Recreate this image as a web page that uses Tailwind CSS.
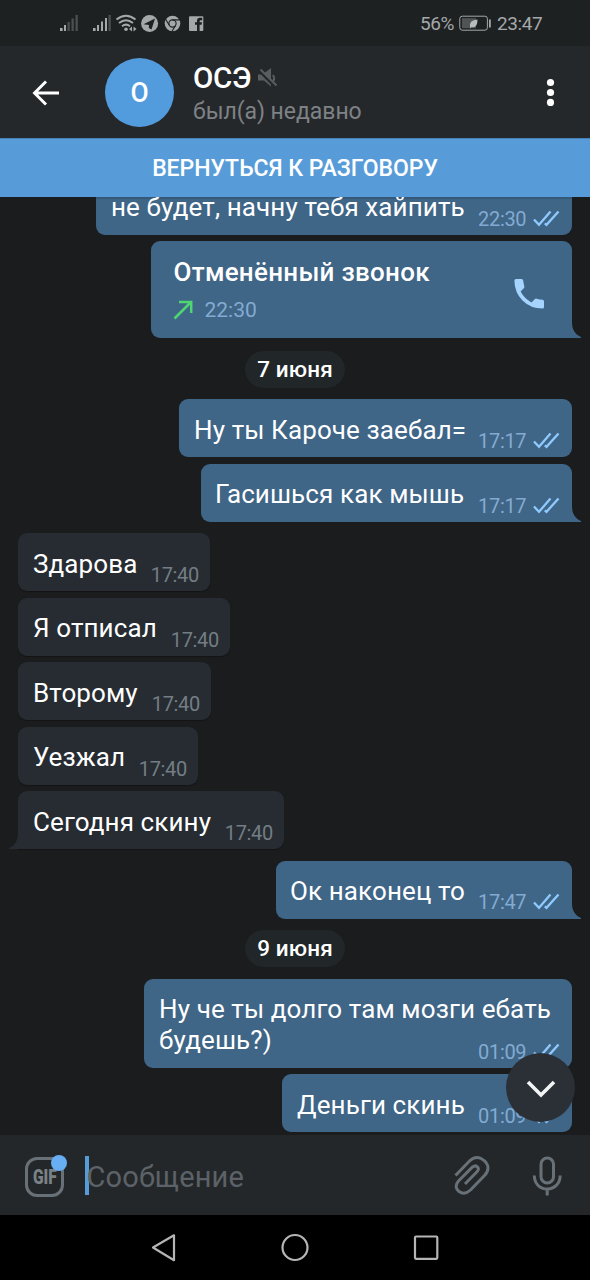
<!DOCTYPE html>
<html lang="ru">
<head>
  <meta charset="UTF-8">
  <title>ОСЭ</title>
  <script src="https://cdn.jsdelivr.net/npm/@tailwindcss/browser@4"></script>
</head>
<body class="w-[590px] h-[1280px] overflow-hidden flex flex-col bg-[#1b1c1d] font-['Roboto','Noto_Sans',sans-serif] text-white">

  <!-- shared shapes -->
  <svg class="hidden">
    <symbol id="checks" viewBox="0 0 27 17"><path d="M1 9.500 6 14.800 17.500 1.500M11.800 13.300 13.500 14.800 25.500 1.500" fill="none" stroke="#8fcaff" stroke-width="2.300"/></symbol>
    <symbol id="tail" viewBox="0 0 10 16"><path d="M0 0C0 7 2.500 12 9 15V16H0Z" fill="currentColor"/></symbol>
  </svg>

  <!-- status bar -->
  <div class="h-[46px] shrink-0 bg-[#1e2122] flex items-center text-[#a5a8aa]">
    <svg class="ml-[58px] mt-px" width="150" height="20" viewBox="58 14 150 20">
      <path d="M60 28h2.600v3H60zM64 25h2v6h-2z" fill="#a5a8aa"/>
      <path d="M67.500 22h2.300v9h-2.300zM71.500 18.500h2.300v12.500h-2.300zM75.500 15h2.300v16h-2.300z" fill="#4c4f51"/>
      <path d="M93 28h2.600v3H93zM97 25h2v6h-2zM101 21.500h2v9.500h-2zM105 18h2v13h-2z" fill="#a5a8aa"/>
      <path d="M108.500 15h2.300v16h-2.300z" fill="#4c4f51"/>
      <g fill="none" stroke="#a5a8aa" stroke-width="2">
        <path d="M116.500 19.500Q126 12 135.500 19.500"/>
        <path d="M119 23Q126 17.500 133 23"/>
        <path d="M122 26.300Q126 23 130 26.300"/>
      </g>
      <circle cx="126" cy="29.300" r="1.800" fill="#a5a8aa"/>
      <path d="M129 29l3-2.500v5zM136.500 29l-3-2.500v5z" fill="#a5a8aa"/>
      <circle cx="149.600" cy="23.500" r="8.500" fill="#a5a8aa"/>
      <path d="M143.500 24.200 155 18.500 151.500 29.500 148.800 28 149 25Z" fill="#1e2122"/>
      <circle cx="172.500" cy="23.500" r="7.800" fill="#a5a8aa"/>
      <g fill="none" stroke="#1e2122" stroke-width="1.100">
        <circle cx="172.500" cy="23.500" r="3.600"/>
        <path d="M172.500 19.900h7.500M169.300 25.300l-4-6.500M175.700 25.300l-4 6.500"/>
      </g>
      <rect x="189" y="16.300" width="14.300" height="14.700" rx="1" fill="#a5a8aa"/>
      <path d="M197 31v-6.200h-2v-2.500h2v-1.600q0-3 3-3h2.200v2.500h-1.400q-1.200 0-1.200 1.200v.9h2.400l-.4 2.500h-2V31z" fill="#1e2122"/>
    </svg>
    <span class="ml-[212px] w-[36px] mt-px text-[19px] tracking-[-0.4px] leading-6 whitespace-nowrap">56%</span>
    <svg class="ml-[3px] mt-px" width="33" height="17" viewBox="0 0 33 17">
      <rect x=".8" y="1.200" width="27.600" height="14" rx="2.500" fill="none" stroke="#a5a8aa" stroke-width="1"/>
      <rect x="3" y="3.200" width="14" height="10" fill="#515456"/>
      <path d="M11 12.500Q9.500 5 18.500 4.500 18.500 13.500 12.500 12L11 13.500Z" fill="#b8bbbc"/>
      <path d="M30 4.500h1.800v8H30z" fill="#a5a8aa"/>
    </svg>
    <span class="ml-[5px] mt-px text-[19px] tracking-[-0.4px] leading-6">23:47</span>
  </div>

  <!-- chat header -->
  <div class="h-[92px] shrink-0 bg-[#25282b] flex items-center">
    <svg class="ml-[31px] mt-px" width="30" height="28" viewBox="0 0 30 28"><path d="M15 2.500 3.500 14 15 25.500M3 14H28" fill="none" stroke="#fff" stroke-width="2.900"/></svg>
    <div class="ml-[44px] w-[69px] h-[69px] rounded-full bg-[#529bdd] flex items-center justify-center pt-[2px] text-[28px] font-medium"><span class="scale-x-[0.94]">О</span></div>
    <div class="ml-[19px] grow flex flex-col pt-[3px]">
      <div class="h-8 flex items-center">
        <span class="text-[29.5px] leading-8 font-medium tracking-[-0.3px] w-[59px]">ОСЭ</span>
        <svg class="ml-[6px]" width="20" height="20" viewBox="0 0 20 20">
          <path d="M0 6.500h4.500L13 0v18.500l-7-6H0z" fill="#595d60"/>
          <path d="M1 2.500 17.500 19" stroke="#25282b" stroke-width="3"/>
          <path d="M2.500 1.500 18.500 17.500" stroke="#595d60" stroke-width="2"/>
          <path d="M15 7q2 3 .5 6" stroke="#595d60" stroke-width="2" fill="none"/>
        </svg>
      </div>
      <span class="mt-1 text-[23px] leading-7 tracking-[-0.05px] text-[#7e8286]">был(а) недавно</span>
    </div>
    <svg class="mr-[35px]" width="9" height="28" viewBox="0 0 9 28" fill="#fff"><circle cx="4.500" cy="4.500" r="3.600"/><circle cx="4.500" cy="14.500" r="3.600"/><circle cx="4.500" cy="24.400" r="3.600"/></svg>
  </div>

  <!-- return to call -->
  <div class="h-[59px] shrink-0 bg-[#579cd8] border-t border-[#4583b8] flex items-center justify-center pt-[2px] text-[23px] tracking-[-0.05px] font-medium"><span>ВЕРНУТЬСЯ К РАЗГОВОРУ</span></div>

  <!-- messages -->
  <main class="relative h-[938px] shrink-0 overflow-hidden flex flex-col items-start text-[26px] leading-[31px] tracking-[0.11px] whitespace-nowrap">
    <div class="ml-[96px] w-[476px] h-[38px] rounded-b-[9px] bg-[#3f6587] flex items-end pl-[15px] pr-3 shadow-[inset_0_2px_1px_#355878]">
      <span class="w-[367px] pb-[12px]">не будет, начну тебя хайпить</span>
      <span class="w-[55px] pb-[6px] text-[20px] leading-5 tracking-[-0.3px] text-[#83abd1]">22:30</span>
      <svg class="mb-[8px]" width="27" height="17"><use href="#checks"/></svg>
    </div>

    <div class="relative mt-[6px] ml-[151px] w-[421px] h-[97px] rounded-[9px] rounded-br-none bg-[#3f6587] flex items-center pl-[22.5px] pr-[27px]">
      <div class="grow">
        <div class="font-medium h-[37px] tracking-[0.27px]">Отменённый звонок</div>
        <div class="flex items-center gap-[12px] pt-1 text-[21px] leading-6 tracking-normal text-[#83abd1]">
          <svg class="-ml-px" width="20" height="20" viewBox="0 0 20 20"><path d="M1.500 18.500 18 2M6 2H18.200V13" fill="none" stroke="#4fd572" stroke-width="2.500"/></svg>
          <span>22:30</span>
        </div>
      </div>
      <svg class="mt-[9px]" width="32" height="32" viewBox="0 0 32 32"><path d="M3 1H8.500Q10 1 10.200 2.500 10.500 5.500 11.300 8.300 11.700 9.400 10.800 10.300L7.600 13.500Q11.300 20.500 18.500 24.400L21.700 21.200Q22.600 20.300 23.700 20.700 26.500 21.600 29.500 21.800 31 22 31 23.500V29Q31 30.600 29.500 30.600 17.500 30.500 9.500 22.500 1.500 14.500 1.400 2.500 1.400 1 3 1Z" fill="#a5d5ff"/></svg>
      <svg class="absolute right-[-10px] bottom-0 text-[#3f6587]" width="10" height="16"><use href="#tail"/></svg>
    </div>

    <div class="self-center mt-[13px] w-[100px] h-[37px] rounded-full bg-[#212628] flex items-center justify-center text-[22.5px] tracking-[0.1px] font-medium"><span>7 июня</span></div>

    <div class="mt-[11px] ml-[179px] w-[393px] h-[58px] rounded-[9px] bg-[#3f6587] flex items-end pl-[15px] pr-3">
      <span class="w-[284px] pb-[11px]">Ну ты Кароче заебал=</span>
      <span class="w-[55px] pb-[6px] text-[20px] leading-5 tracking-[-0.3px] text-[#83abd1]">17:17</span>
      <svg class="mb-[8px]" width="27" height="17"><use href="#checks"/></svg>
    </div>
    <div class="relative mt-[7px] ml-[200.5px] w-[371.5px] h-[58px] rounded-[9px] rounded-br-none bg-[#3f6587] flex items-end pl-[14.5px] pr-3">
      <span class="w-[263px] pb-[12px]">Гасишься как мышь</span>
      <span class="w-[55px] pb-[6px] text-[20px] leading-5 tracking-[-0.3px] text-[#83abd1]">17:17</span>
      <svg class="mb-[8px]" width="27" height="17"><use href="#checks"/></svg>
      <svg class="absolute right-[-10px] bottom-0 text-[#3f6587]" width="10" height="16"><use href="#tail"/></svg>
    </div>

    <div class="relative mt-[11px] ml-[18px] flex flex-col gap-[6.5px] items-start">
      <div class="w-[192px] h-[58px] rounded-[9px] bg-[#262c31] flex items-end justify-between pl-[15px] pr-[11px] shadow-[0_1px_1px_#141516]">
        <span class="pb-[11px]">Здарова</span><span class="pb-[6px] text-[20px] leading-5 tracking-[-0.3px] text-[#747d85]">17:40</span>
      </div>
      <div class="w-[212px] h-[58px] rounded-[9px] bg-[#262c31] flex items-end justify-between pl-[15px] pr-[11px] shadow-[0_1px_1px_#141516]">
        <span class="pb-[12px]">Я отписал</span><span class="pb-[6px] text-[20px] leading-5 tracking-[-0.3px] text-[#747d85]">17:40</span>
      </div>
      <div class="w-[193px] h-[58px] rounded-[9px] bg-[#262c31] flex items-end justify-between pl-[15px] pr-[11px] shadow-[0_1px_1px_#141516]">
        <span class="pb-[11px]">Второму</span><span class="pb-[6px] text-[20px] leading-5 tracking-[-0.3px] text-[#747d85]">17:40</span>
      </div>
      <div class="w-[180px] h-[58px] rounded-[9px] bg-[#262c31] flex items-end justify-between pl-[15px] pr-[11px] shadow-[0_1px_1px_#141516]">
        <span class="pb-[12px]">Уезжал</span><span class="pb-[6px] text-[20px] leading-5 tracking-[-0.3px] text-[#747d85]">17:40</span>
      </div>
      <div class="relative w-[266px] h-[58px] rounded-[9px] rounded-bl-none bg-[#262c31] flex items-end justify-between pl-[15px] pr-[11px] shadow-[0_1px_1px_#141516]">
        <span class="pb-[11px]">Сегодня скину</span><span class="pb-[6px] text-[20px] leading-5 tracking-[-0.3px] text-[#747d85]">17:40</span>
        <svg class="absolute left-[-10px] bottom-0 -scale-x-100 text-[#262c31]" width="10" height="16"><use href="#tail"/></svg>
      </div>
    </div>

    <div class="relative mt-[12px] ml-[275.5px] w-[296.5px] h-[58px] rounded-[9px] rounded-br-none bg-[#3f6587] flex items-end pl-[14.5px] pr-3">
      <span class="w-[188px] pb-[12px]">Ок наконец то</span>
      <span class="w-[55px] pb-[7px] text-[20px] leading-5 tracking-[-0.3px] text-[#83abd1]">17:47</span>
      <svg class="mb-[9px]" width="27" height="17"><use href="#checks"/></svg>
      <svg class="absolute right-[-10px] bottom-0 text-[#3f6587]" width="10" height="16"><use href="#tail"/></svg>
    </div>

    <div class="self-center mt-[11px] w-[100px] h-[37px] rounded-full bg-[#212628] flex items-center justify-center text-[22.5px] tracking-[0.1px] font-medium"><span>9 июня</span></div>

    <div class="mt-[12px] ml-[144px] w-[428px] h-[89px] rounded-[9px] bg-[#3f6587] flex items-end pl-[15px] pr-3">
      <span class="w-[319px] pb-[12px]">Ну че ты долго там мозги ебать<br>будешь?)</span>
      <span class="w-[55px] pb-[6px] text-[20px] leading-5 tracking-[-0.3px] text-[#83abd1]">01:09</span>
      <svg class="mb-[8px]" width="27" height="17"><use href="#checks"/></svg>
    </div>
    <div class="mt-[6px] ml-[282px] w-[290px] h-[58px] rounded-[9px] bg-[#3f6587] flex items-end pl-[15px] pr-3">
      <span class="w-[181px] pb-[11.5px]">Деньги скинь</span>
      <span class="w-[55px] pb-[6px] text-[20px] leading-5 tracking-[-0.3px] text-[#83abd1]">01:09</span>
      <svg class="mb-[8px]" width="27" height="17"><use href="#checks"/></svg>
    </div>

    <!-- scroll down button -->
    <div class="absolute right-[15px] bottom-[13px] w-[69px] h-[69px] rounded-full bg-[#2b3036] flex items-center justify-center">
      <svg class="mt-[3px]" width="30" height="18" viewBox="0 0 30 18"><path d="M2 2 15 15 28 2" fill="none" stroke="#f2f3f4" stroke-width="3.600"/></svg>
    </div>
  </main>

  <!-- input -->
  <div class="h-[80px] shrink-0 bg-[#232729] flex items-center">
    <div class="relative ml-[25px] mt-[4px] w-[39px] h-[40px] rounded-[12px] border-[3px] border-[#687178] flex items-center justify-center text-[#7a8287] text-[19.5px] font-black">
      <span class="scale-x-[0.8] -mx-2 pt-px">GIF</span>
      <span class="absolute -top-[5px] -right-[6px] w-4 h-4 rounded-full bg-[#68aef2]"></span>
    </div>
    <div class="ml-[21px] w-[3.5px] h-[39px] mt-px bg-[#579cd8]"></div>
    <span class="-ml-[2px] grow text-[29px] leading-8 mt-[3px] tracking-[0.15px] text-[#5c6267]">Сообщение</span>
    <svg class="mt-[2px]" width="36" height="40" viewBox="454 1157 36 40" fill="none" stroke="#687178" stroke-width="3">
      <path d="M455.500 1176.500 469.500 1162Q475 1156.700 481 1159.500 488 1163.500 488 1169 488 1173 484.500 1176.500L470.500 1191Q464.500 1196.500 459 1192.500 453.500 1188 458.500 1182L472.500 1168Q475.500 1165.700 477.500 1168 479.500 1170.300 477 1172.800L465 1185"/>
    </svg>
    <svg class="ml-[42px] mr-[28px] mt-[2px]" width="30" height="40" viewBox="0 0 30 40" fill="none" stroke="#687178" stroke-width="3">
      <rect x="9" y="2" width="12.500" height="25" rx="6.200"/><path d="M2.300 19.500C2.500 28 8 33 15.200 33S28 28 28.200 19.500M15.200 33V39.500"/>
    </svg>
  </div>

  <!-- android navigation -->
  <div class="h-[65px] shrink-0 bg-black">
    <svg width="590" height="65" viewBox="0 1215 590 65" fill="none" stroke="#b5b5b5" stroke-width="2.200" stroke-linejoin="round">
      <path d="M153 1247.500 174 1235.300V1260.200Z"/>
      <circle cx="295" cy="1247.500" r="12.500"/>
      <rect x="415" y="1236.500" width="22.300" height="22.300" rx="1"/>
    </svg>
  </div>
</body>
</html>
